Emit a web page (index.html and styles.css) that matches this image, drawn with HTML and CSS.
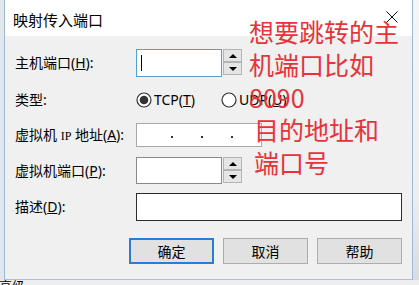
FILE: index.html
```html
<!DOCTYPE html>
<html lang="zh-CN">
<head>
<meta charset="utf-8">
<title>映射传入端口</title>
<link rel="stylesheet" href="styles.css">
</head>
<body>
<div class="screen">
  <div class="main-row">
    <div class="edge-left"></div>
    <div class="window">
      <div class="titlebar">
        <span class="title">映射传入端口</span>
        <svg class="close" width="12" height="12" viewBox="0 0 12 12"><path d="M0.5 0.5 L11.5 11.5 M11.5 0.5 L0.5 11.5" stroke="#111" stroke-width="1" fill="none"/></svg>
      </div>
      <div class="content">
        <div class="row row-host">
          <span class="lbl">主机端口(<u>H</u>):</span>
          <div class="field">
            <div class="input input-focus w-port"><span class="caret"></span></div>
            <div class="spin">
              <span class="spin-btn"><i class="tri-up"></i></span>
              <span class="spin-btn"><i class="tri-down"></i></span>
            </div>
          </div>
        </div>
        <div class="row row-type">
          <span class="lbl">类型:</span>
          <div class="field">
            <div class="radio-group tcp">
              <svg class="radio" width="16" height="16" viewBox="0 0 16 16"><circle cx="8" cy="8" r="7" fill="#fff" stroke="#333" stroke-width="1.2"/><circle cx="8" cy="8" r="4.3" fill="#333"/></svg>
              <span class="radio-text">TCP(<u>T</u>)</span>
            </div>
            <div class="radio-group">
              <svg class="radio" width="16" height="16" viewBox="0 0 16 16"><circle cx="8" cy="8" r="7" fill="#fff" stroke="#333" stroke-width="1.2"/></svg>
              <span class="radio-text">UDP(<u>U</u>)</span>
            </div>
          </div>
        </div>
        <div class="row row-ip">
          <span class="lbl">虚拟机 <span class="ip-word">IP</span> 地址(<u>A</u>):</span>
          <div class="field">
            <div class="input ip-box"><i class="dot"></i><i class="dot"></i><i class="dot"></i></div>
          </div>
        </div>
        <div class="row row-vport">
          <span class="lbl">虚拟机端口(<u>P</u>):</span>
          <div class="field">
            <div class="input input-gray w-port"></div>
            <div class="spin">
              <span class="spin-btn"><i class="tri-up"></i></span>
              <span class="spin-btn"><i class="tri-down"></i></span>
            </div>
          </div>
        </div>
        <div class="row row-desc">
          <span class="lbl">描述(<u>D</u>):</span>
          <div class="field">
            <div class="input input-dark w-desc"></div>
          </div>
        </div>
        <div class="buttons">
          <button class="btn btn-default">确定</button>
          <button class="btn">取消</button>
          <button class="btn">帮助</button>
        </div>
      </div>
    </div>
    <div class="edge-right"></div>
  </div>
  <div class="bottom-strip"><span class="behind-text">高级</span></div>

  <div class="note note-1">想要跳转的主<br>机端口比如<br>8090</div>
  <div class="note note-2">目的地址和<br>端口号</div>
</div>
</body>
</html>
```
FILE: styles.css
```css
* { box-sizing: border-box; }
html, body { margin: 0; padding: 0; }
body {
  width: 419px;
  height: 285px;
  overflow: hidden;
  background: #ebedf0;
  font-family: "Noto Sans", "Noto Sans CJK SC", sans-serif;
  color: #000;
}
.screen {
  position: relative;
  width: 419px;
  height: 285px;
  display: flex;
  flex-direction: column;
}
.main-row {
  display: flex;
  height: 280px;
}
.edge-left {
  width: 4px;
  background: #e2e7ed;
}
.edge-right {
  width: 6px;
  background: linear-gradient(to bottom, #f4f5f6 0, #eceef0 70%, #d9dcdf 100%);
}
.window {
  width: 409px;
  height: 280px;
  border-left: 1px solid #9fb8d8;
  border-right: 1px solid #9fb8d8;
  border-bottom: 1px solid #a9c0dc;
  display: flex;
  flex-direction: column;
  background: #f0f0f0;
}
.titlebar {
  height: 36px;
  background: #fff;
  display: flex;
  align-items: center;
  justify-content: space-between;
  padding: 4px 14px 0 8px;
}
.title {
  font-family: "Noto Sans CJK SC", sans-serif;
  font-size: 15px;
  line-height: 20px;
}
.close {
  align-self: flex-start;
  margin-top: 7px;
}
.content {
  flex: 1;
  padding: 13px 10px 0 10px;
  display: flex;
  flex-direction: column;
}
.row {
  display: flex;
  align-items: center;
}
.lbl {
  width: 121px;
  font-size: 14px;
  line-height: 20px;
  white-space: nowrap;
}
.ip-word {
  font-family: "Liberation Serif", serif;
  font-size: 12px;
}
.field {
  display: flex;
  align-items: flex-start;
}
.row-host { height: 28px; }
.row-type { height: 20px; margin-top: 13px; }
.row-ip { height: 24px; margin-top: 13px; }
.row-vport { height: 27px; margin-top: 10px; }
.row-desc { height: 28px; margin-top: 9px; }

.input {
  background: #fff;
  border: 1px solid #7a7a7a;
  display: flex;
  align-items: center;
}
.w-port { width: 86px; }
.row-host .input { height: 28px; }
.row-vport .input { height: 27px; }
.input-focus { border-color: #5b9bd5; padding-left: 4px; }
.input-gray { border-color: #8a8a8a; }
.input-dark { border-color: #2b2b2b; }
.w-desc { width: 266px; height: 28px; }
.caret {
  width: 1px;
  height: 16px;
  background: #000;
}
.ip-box {
  width: 126px;
  height: 24px;
  border-color: #a7a7a7;
  padding-left: 34px;
  gap: 28px;
}
.dot {
  width: 2px;
  height: 2px;
  background: #333;
  margin-top: 4px;
}
.spin {
  display: flex;
  flex-direction: column;
  margin-left: 1px;
  width: 19px;
}
.spin-btn {
  height: 13px;
  background: #e5e5e5;
  border: 1px solid #b4b4b4;
  display: flex;
  align-items: center;
  justify-content: center;
}
.tri-up {
  width: 0;
  height: 0;
  border-left: 4px solid transparent;
  border-right: 4px solid transparent;
  border-bottom: 4px solid #000;
}
.tri-down {
  width: 0;
  height: 0;
  border-left: 4px solid transparent;
  border-right: 4px solid transparent;
  border-top: 4px solid #000;
}
.radio-group {
  display: flex;
  align-items: center;
  gap: 2px;
}
.radio-group.tcp { width: 85px; }
.radio-text {
  font-size: 14px;
  line-height: 20px;
}
.buttons {
  display: flex;
  justify-content: flex-end;
  gap: 9px;
  margin-top: 17px;
}
.btn {
  width: 85px;
  height: 26px;
  padding: 0;
  background: #e1e1e1;
  border: 1px solid #adadad;
  font-family: "Noto Sans CJK SC", sans-serif;
  font-size: 14px;
  line-height: 20px;
  color: #000;
}
.btn-default {
  border: 2px solid #2b7cd3;
}
.bottom-strip {
  height: 5px;
  overflow: hidden;
  background: #eeeeee;
}
.behind-text {
  display: block;
  font-family: "Noto Sans CJK SC", sans-serif;
  font-size: 13px;
  line-height: 12px;
  margin-left: -1px;
}
.note {
  position: absolute;
  font-family: "Noto Sans CJK SC", sans-serif;
  font-size: 25px;
  line-height: 33px;
  color: #e8323a;
  white-space: nowrap;
}
.note-1 { left: 249px; top: 15px; }
.note-2 { left: 254px; top: 113px; }
```
